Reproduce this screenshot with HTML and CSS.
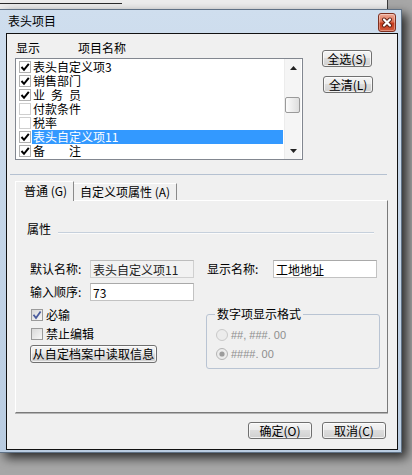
FILE: index.html
```html
<!DOCTYPE html>
<html lang="zh-CN">
<head>
  <meta charset="UTF-8">
  <title>表头项目</title>
  <link rel="stylesheet" href="styles.css">
</head>
<body>
  <div class="strip"><div class="strip-line"></div></div>
  <div class="window">
    <div class="titlebar">
      <span class="title">表头项目</span>
      <span class="close">
        <svg width="16" height="17" viewBox="0 0 16 17">
          <path d="M5 5.5 L11 11.5 M11 5.5 L5 11.5" stroke="#5a1d12" stroke-width="4" stroke-linecap="round"/>
          <path d="M5 5.5 L11 11.5 M11 5.5 L5 11.5" stroke="#fff" stroke-width="2.2" stroke-linecap="round"/>
        </svg>
      </span>
    </div>

    <div class="client">
      <div class="top">
        <div class="list-col">
          <div class="list-head"><span class="h-show">显示</span><span>项目名称</span></div>
          <div class="listbox">
            <div class="rows">
              <div class="row"><span class="cb"><svg width="10" height="10" viewBox="0 0 10 10"><path d="M1.5 5 L4 7.8 L8.8 1.8" fill="none" stroke="#000" stroke-width="2"/></svg></span><span class="txt">表头自定义项3</span></div>
              <div class="row"><span class="cb"><svg width="10" height="10" viewBox="0 0 10 10"><path d="M1.5 5 L4 7.8 L8.8 1.8" fill="none" stroke="#000" stroke-width="2"/></svg></span><span class="txt">销售部门</span></div>
              <div class="row"><span class="cb"><svg width="10" height="10" viewBox="0 0 10 10"><path d="M1.5 5 L4 7.8 L8.8 1.8" fill="none" stroke="#000" stroke-width="2"/></svg></span><span class="txt">业&ensp;务&ensp;员</span></div>
              <div class="row"><span class="cb off"></span><span class="txt">付款条件</span></div>
              <div class="row"><span class="cb off"></span><span class="txt">税率</span></div>
              <div class="row sel"><span class="cb"><svg width="10" height="10" viewBox="0 0 10 10"><path d="M1.5 5 L4 7.8 L8.8 1.8" fill="none" stroke="#000" stroke-width="2"/></svg></span><span class="txt">表头自定义项11</span></div>
              <div class="row"><span class="cb"><svg width="10" height="10" viewBox="0 0 10 10"><path d="M1.5 5 L4 7.8 L8.8 1.8" fill="none" stroke="#000" stroke-width="2"/></svg></span><span class="txt">备&ensp;&ensp;&ensp;&ensp;注</span></div>
            </div>
            <div class="vscroll">
              <div class="arrow"><svg width="7" height="4" viewBox="0 0 7 4"><path d="M0 4 L3.5 0 L7 4 Z" fill="#222"/></svg></div>
              <div class="track"><div class="thumb"></div></div>
              <div class="arrow"><svg width="7" height="4" viewBox="0 0 7 4"><path d="M0 0 L7 0 L3.5 4 Z" fill="#222"/></svg></div>
            </div>
          </div>
        </div>
        <div class="side-btns">
          <button class="btn btn-sm">全选(S)</button>
          <button class="btn btn-sm btn-shift">全清(L)</button>
        </div>
      </div>

      <div class="sep"></div>

      <div class="tabs">
        <div class="tab tab-on">普通 (G)</div>
        <div class="tab tab-off">自定义项属性 (A)</div>
      </div>

      <div class="panel">
        <div class="group-title">
          <span>属性</span>
          <span class="group-line"></span>
        </div>

        <div class="form-row first">
          <span class="lbl">默认名称:</span>
          <input class="field ro" type="text" value="表头自定义项11" readonly>
          <span class="lbl lbl-2">显示名称:</span>
          <input class="field" type="text" value="工地地址">
        </div>
        <div class="form-row">
          <span class="lbl">输入顺序:</span>
          <input class="field" type="text" value="73">
        </div>

        <div class="lower">
          <div class="checks">
            <div class="chk-row">
              <span class="chk-box"><svg width="10" height="10" viewBox="0 0 10 10"><path d="M1.5 4.8 L4 8 L8.6 1.5" fill="none" stroke="#4a5c9e" stroke-width="1.8"/></svg></span>
              <span>必输</span>
            </div>
            <div class="chk-row">
              <span class="chk-box"></span>
              <span>禁止编辑</span>
            </div>
            <button class="btn btn-read">从自定档案中读取信息</button>
          </div>

          <fieldset class="fmt">
            <legend>数字项显示格式</legend>
            <div class="radio-row">
              <svg class="radio" width="12" height="12" viewBox="0 0 12 12"><circle cx="6" cy="6" r="5.5" fill="#ececec" stroke="#c8c8c8"/></svg>
              <span class="radio-txt">##, ###. 00</span>
            </div>
            <div class="radio-row">
              <svg class="radio" width="12" height="12" viewBox="0 0 12 12"><circle cx="6" cy="6" r="5.5" fill="#ececec" stroke="#b4b4b4"/><circle cx="6" cy="6" r="2.6" fill="#9c9c9c"/></svg>
              <span class="radio-txt">####. 00</span>
            </div>
          </fieldset>
        </div>
      </div>

      <div class="footer">
        <button class="btn btn-ok">确定(O)</button>
        <button class="btn btn-ok">取消(C)</button>
      </div>
    </div>
  </div>
</body>
</html>
```

FILE: styles.css
```css
* { box-sizing: border-box; }
html, body { margin: 0; padding: 0; }
body { width: 412px; height: 475px; overflow: hidden; background: #a7a7a7; font-family: "Noto Sans CJK SC", "Noto Sans", sans-serif; font-size: 12px; line-height: 14px; color: #000; }

.strip { width: 388px; height: 9px; padding-top: 3px; background: #ececec; border-right: 1px solid #3a3a3a; }
.strip-line { width: 122px; height: 1px; background: #2b2b2b; }

.window { width: 402px; height: 444px; display: flex; flex-direction: column; padding: 0 3px 2px 6px; background: linear-gradient(#cfdeee, #b9cce1); border: 1px solid #5f7185; border-left: none; box-shadow: 5px 5px 10px rgba(0, 0, 0, 0.75); }

.titlebar { height: 23px; display: flex; justify-content: space-between; align-items: flex-start; padding-left: 2px; margin-right: 2px; }
.title { margin-top: 4px; font-size: 12px; }
.close { width: 18px; height: 19px; margin-top: 3px; display: flex; align-items: center; justify-content: center; border: 1px solid #7e3020; border-radius: 3px; background: linear-gradient(#eeab98, #dd7155 45%, #c53b1c 55%, #d35a3c); box-shadow: inset 0 0 0 1px rgba(255, 255, 255, 0.35); }

.client { flex: 1; display: flex; flex-direction: column; border: 1px solid #111; background: #f0f0f0; }

.top { display: flex; }
.list-col { margin: 7px 0 0 8px; }
.list-head { display: flex; height: 14px; padding-left: 1px; }
.h-show { width: 62px; }

.listbox { margin-top: 3px; width: 288px; height: 102px; display: flex; border: 1px solid #828790; background: #fff; }
.rows { width: 268px; padding-top: 1px; }
.row { height: 14px; display: flex; align-items: center; }
.cb { width: 12px; height: 12px; margin-left: 3px; display: flex; align-items: center; justify-content: center; border: 1px solid #b0b0b0; background: #fff; }
.cb.off { border-color: #cfcfcf; }
.txt { flex: 1; height: 14px; margin: 0 1px 0 1px; padding-left: 1px; white-space: nowrap; }
.sel .txt { background: #3399ff; color: #fff; }

.vscroll { width: 17px; display: flex; flex-direction: column; background: #f5f5f5; border-left: 1px solid #ececec; }
.arrow { height: 17px; display: flex; align-items: center; justify-content: center; }
.track { flex: 1; }
.thumb { width: 15px; height: 16px; margin-top: 21px; border: 1px solid #9a9a9a; border-radius: 2px; background: linear-gradient(90deg, #fbfbfb, #dedede); }

.btn { font-family: inherit; font-size: 12px; line-height: 14px; color: #000; padding: 0; white-space: nowrap; border: 1px solid #707070; border-radius: 3px; background: linear-gradient(#f4f4f4, #ececec 45%, #dddddd 50%, #d0d0d0); box-shadow: inset 0 0 0 1px rgba(255, 255, 255, 0.7); }
.side-btns { margin-left: 19px; padding-top: 16px; display: flex; flex-direction: column; gap: 9px; }
.btn-sm { width: 50px; height: 17px; }
.btn-shift { margin-left: 1px; }

.sep { height: 1px; margin: 14px 10px 0 3px; background: #b5c1d1; }

.tabs { position: relative; z-index: 1; display: flex; align-items: flex-end; margin: 6px 0 -1px 8px; }
.tab { border-top: 1px solid #fff; border-right: 1px solid #8a8a8a; background: #f0f0f0; white-space: nowrap; }
.tab-on { width: 59px; height: 20px; padding: 2px 0 0 8px; border-left: 1px solid #fff; }
.tab-off { width: 103px; height: 17px; margin-bottom: 1px; padding: 1px 0 0 6px; }

.panel { width: 373px; height: 213px; margin-left: 8px; border-top: 1px solid #fff; border-left: 1px solid #fff; border-right: 1px solid #7a7a7a; border-bottom: 1px solid #7a7a7a; box-shadow: 0 1px 0 #b4b4b4; }

.group-title { display: flex; margin-top: 21px; padding-left: 11px; }
.group-line { flex: 1; height: 2px; margin: 10px 13px 0 7px; border-top: 1px solid #c6d0dc; border-bottom: 1px solid #fbfbfb; }

.form-row { display: flex; align-items: center; height: 18px; margin-top: 5px; padding-left: 14px; }
.form-row.first { margin-top: 24px; }
.lbl { width: 60px; white-space: nowrap; }
.lbl-2 { width: 66px; margin-left: 13px; }
.field { width: 104px; height: 18px; padding: 0 0 0 2px; font-family: inherit; font-size: 12px; color: #000; background: #fff; border: 1px solid #c2c2c2; border-top-color: #a9a9a9; outline: none; }
.field.ro { background: #f2f2f2; color: #222; border-color: #d0d0d0; border-top-color: #bdbdbd; }

.lower { display: flex; margin-top: 4px; padding-left: 14px; }
.checks { width: 176px; }
.chk-row { height: 19px; display: flex; align-items: center; }
.chk-box { width: 12px; height: 12px; margin: 0 3px 0 1px; display: flex; align-items: center; justify-content: center; border: 1px solid #9a9a9a; background: linear-gradient(135deg, #d8d8d8, #f7f7f7); }
.btn-read { width: 127px; height: 18px; margin-top: 2px; letter-spacing: 0.2px; }

.fmt { width: 174px; margin: 2px 0 0 0; padding: 4px 0 5px 8px; border: 1px solid #b9c4d3; border-radius: 3px; }
.fmt legend { padding: 0 2px; line-height: 14px; }
.radio-row { height: 19px; display: flex; align-items: center; }
.radio { margin: 0 3px 0 1px; }
.radio-txt { font-family: "Liberation Sans", Arial, sans-serif; font-size: 11px; color: #8e8e8e; }

.footer { display: flex; justify-content: flex-end; gap: 10px; margin-top: 9px; padding-right: 11px; }
.btn-ok { width: 64px; height: 17px; }
```
